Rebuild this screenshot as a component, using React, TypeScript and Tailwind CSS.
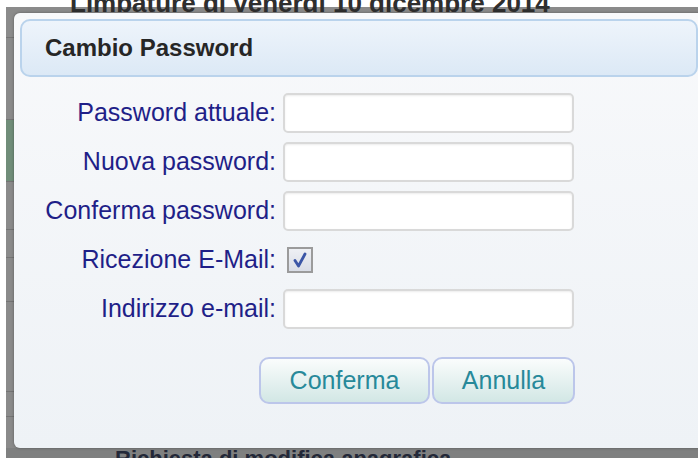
import React from "react";

const font = "font-['Liberation_Sans',Arial,sans-serif]";

// page table rows showing at the left edge, already dimmed by the modal backdrop
const stripRows = [
  { h: 31, bg: "bg-[#8b8b8b]" },
  { h: 82, bg: "bg-[#8a8a8a]" },
  { h: 62, bg: "bg-[#708d79]" },
  { h: 48, bg: "bg-[#8a8a8a]" },
  { h: 28, bg: "bg-[#8a8a8a]" },
  { h: 44, bg: "bg-[#8a8a8a]" },
  { h: 90, bg: "bg-[#8a8a8a]" },
  { h: 25, bg: "bg-[#8a8a8a]" },
];

function Field({ label, children }: { label: string; children: React.ReactNode }) {
  return (
    <>
      <label className="h-10 flex items-center justify-end text-[25px] text-[#1f1f88] whitespace-nowrap">{label}</label>
      <div className="h-10 flex items-center">{children}</div>
    </>
  );
}

function TextBox({ type = "text" }: { type?: string }) {
  return (
    <input
      type={type}
      className="w-[291px] h-10 rounded-[5px] border-2 border-[#d9d9d9] bg-white shadow-[inset_0_1px_2px_rgba(0,0,0,0.08)] outline-none px-2 text-[20px]"
    />
  );
}

function CheckBox({ checked }: { checked: boolean }) {
  return (
    <div className="ml-[4px] w-[26px] h-[26px] border-2 border-[#9b9b9b] bg-linear-to-b from-[#eef0f4] to-[#d9dde6] flex items-center justify-center">
      {checked && (
        <svg width="18" height="18" viewBox="0 0 18 18">
          <path d="M4 9.5 L7.5 15 L14 3" fill="none" stroke="#3b56a6" strokeWidth="2.8" strokeLinecap="round" strokeLinejoin="round" />
        </svg>
      )}
    </div>
  );
}

function Button({ children, w }: { children: React.ReactNode; w: string }) {
  return (
    <button
      type="button"
      className={`${w} h-[47px] rounded-[10px] border-2 border-[#bcc6ea] bg-linear-to-b from-[#fafcfc] to-[#d2e7e5] text-[25px] text-[#27899a]`}
    >
      {children}
    </button>
  );
}

export default function App() {
  return (
    <div className={`relative w-[698px] h-[458px] overflow-hidden bg-[#8a8a8a] flex flex-col ${font}`}>
      {/* page title, mostly hidden behind the dialog */}
      <div className="h-[7px] shrink-0 bg-white">
        <p className="relative pl-[70px] -mt-[11px] text-[26px] leading-[28px] font-bold text-[#2e2e2e] whitespace-nowrap">
          Limbature di venerdì 10 dicembre 2014
        </p>
      </div>

      {/* backdrop over the page */}
      <div className="flex flex-1">
        <div className="w-[6px] bg-white" />
        <div className="flex-1 flex flex-col">
          <div className="flex-1 w-[20px] flex flex-col">
            {stripRows.map((r, i) => (
              <div key={i} className={`${r.bg} border-b border-[#747474]`} style={{ height: r.h }} />
            ))}
          </div>
          <div className="h-[10px] overflow-hidden bg-[#7f8080]">
            <p className="pl-[109px] -mt-[2px] text-[22px] leading-[26px] font-bold text-[#232838] whitespace-nowrap">
              Richiesta di modifica anagrafica
            </p>
          </div>
        </div>
      </div>

      {/* dialog */}
      <div className="absolute left-[14px] top-[13px] w-[690px] h-[435px] rounded-[6px] bg-linear-to-b from-[#f8f9fb] to-[#eef2f6] shadow-[0_0_3px_rgba(0,0,0,0.35)] p-[6px]">
        <div className="h-[58px] rounded-[10px] border-2 border-[#bad3ec] bg-linear-to-b from-[#eef4fb] to-[#dce9f6] flex items-center pl-[23px]">
          <h2 className="text-[24px] font-bold text-[#262626]">Cambio Password</h2>
        </div>

        <form className="mt-[16px] w-[555px]">
          <div className="grid grid-cols-[256px_291px] gap-x-[7px] gap-y-[9px]">
            <Field label="Password attuale:">
              <TextBox type="password" />
            </Field>
            <Field label="Nuova password:">
              <TextBox type="password" />
            </Field>
            <Field label="Conferma password:">
              <TextBox type="password" />
            </Field>
            <Field label="Ricezione E-Mail:">
              <CheckBox checked />
            </Field>
            <Field label="Indirizzo e-mail:">
              <TextBox type="email" />
            </Field>
          </div>
          <div className="mt-[28px] flex justify-end gap-[2px]">
            <Button w="w-[171px]">Conferma</Button>
            <Button w="w-[143px]">Annulla</Button>
          </div>
        </form>
      </div>
    </div>
  );
}
